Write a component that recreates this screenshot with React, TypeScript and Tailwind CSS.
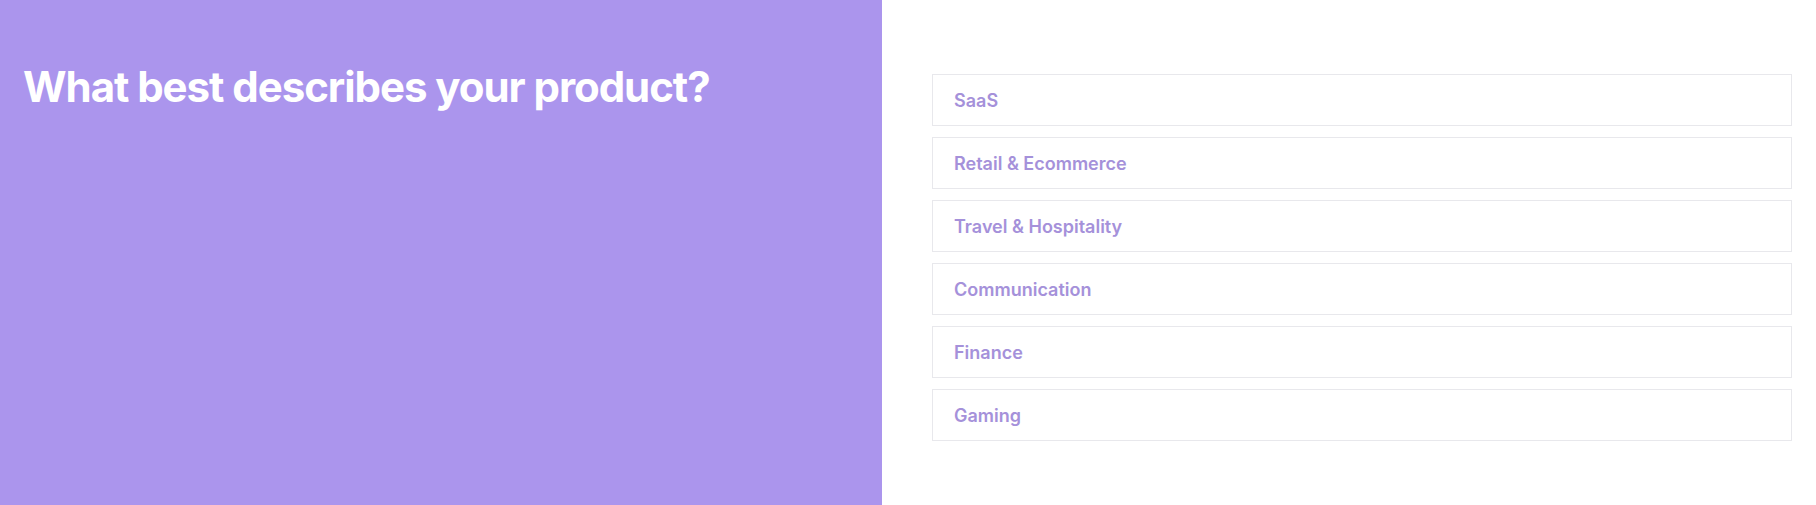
const options = [
  "SaaS",
  "Retail & Ecommerce",
  "Travel & Hospitality",
  "Communication",
  "Finance",
  "Gaming",
];

export default function App() {
  return (
    <div className="flex h-[505px] w-full font-['Inter',sans-serif]">
      <div className="w-[882px] shrink-0 bg-[#ab95ed] pl-[23px] pt-[62px]">
        <h1 className="text-[42px] font-bold leading-[50px] tracking-[-0.025em] text-white">
          What best describes your product?
        </h1>
      </div>

      <div className="flex flex-1 flex-col gap-[11px] bg-white pl-[50px] pr-[24px] pt-[74px]">
        {options.map((option) => (
          <button
            key={option}
            className="flex h-[52px] w-full items-center border border-[#e8e8ec] bg-white pl-[21px] text-left text-[18px] font-semibold text-[#a591da]"
          >
            {option}
          </button>
        ))}
      </div>
    </div>
  );
}
